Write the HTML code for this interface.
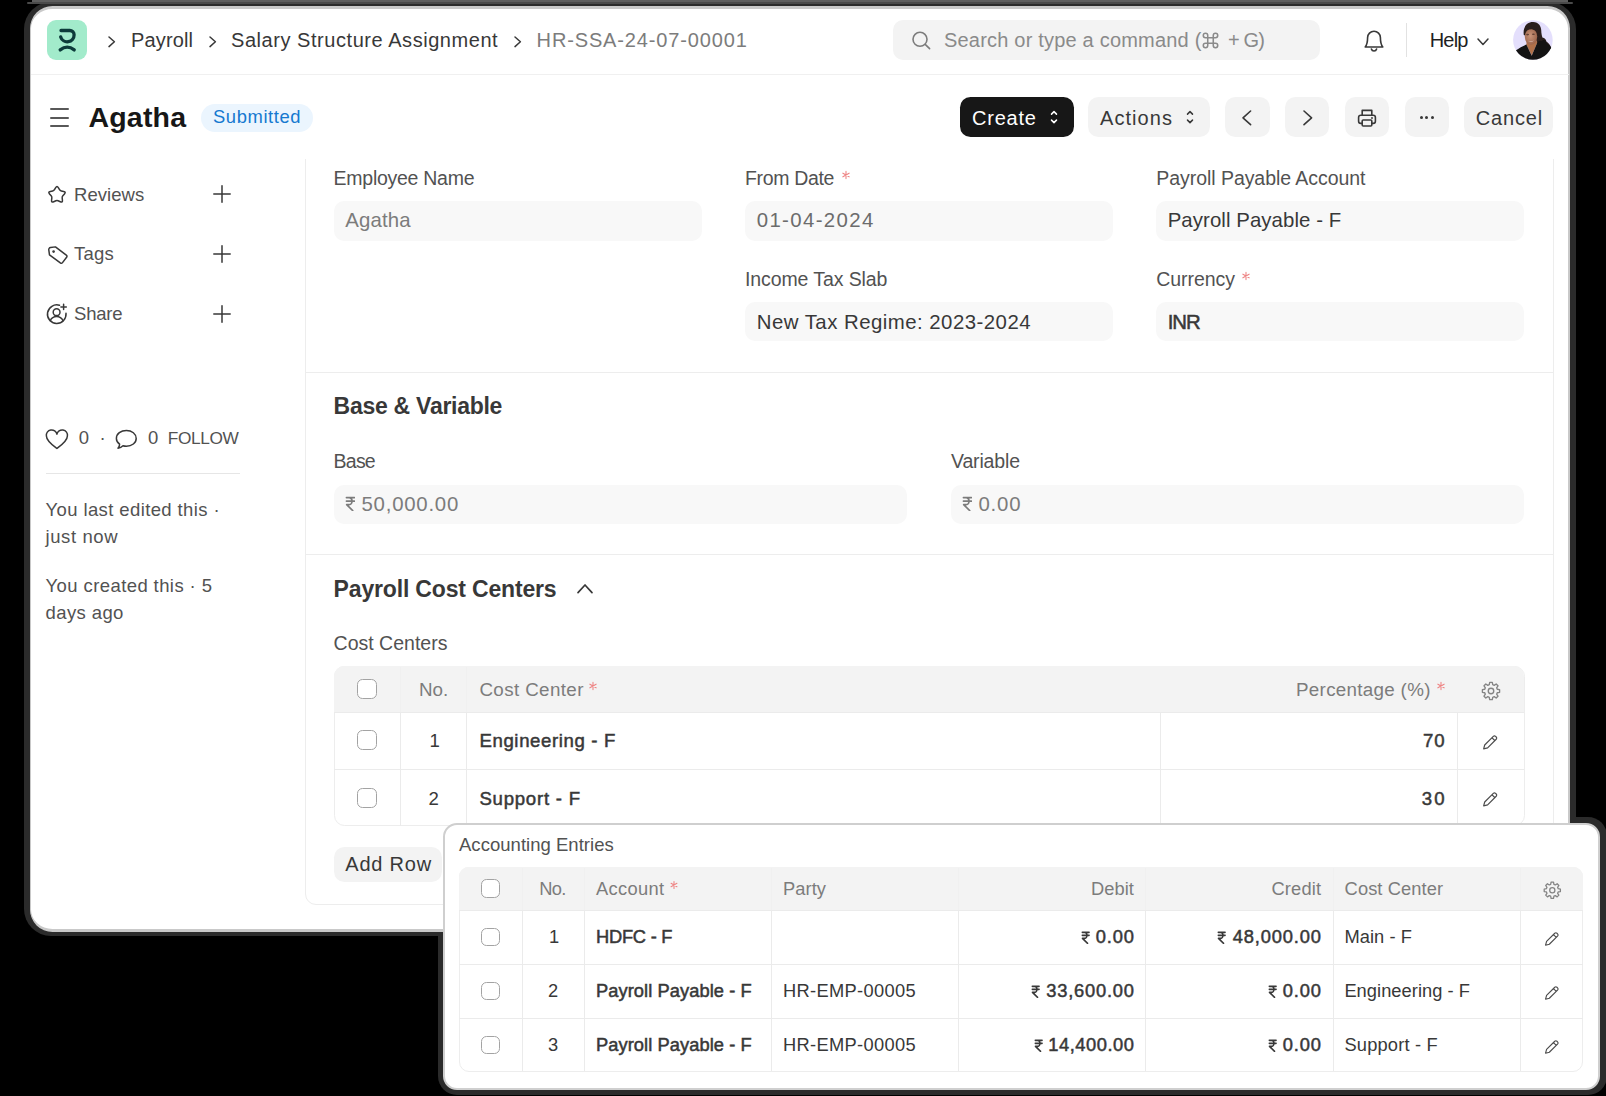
<!DOCTYPE html><html><head><meta charset="utf-8"><title>Salary Structure Assignment</title><style>
html,body{margin:0;padding:0;background:#000;}body{width:1606px;height:1096px;position:relative;overflow:hidden;font-family:"Liberation Sans", sans-serif;}
.a{position:absolute;display:block;}.t{position:absolute;white-space:pre;line-height:1;font-family:"Liberation Sans", sans-serif;}
</style></head><body>
<div class="a" style="left:32px;top:0px;width:1536px;height:2.2px;background:#5e5e5e;"></div>
<div class="a" style="left:437.5px;top:816.5px;width:1169.0px;height:278.0px;background:#2b2b2b;border-radius:19px;"></div>
<div class="a" style="left:24px;top:2px;width:1552px;height:934px;background:#2b2b2b;border-radius:27px;"></div>
<div class="a" style="left:27px;top:2.2px;width:1546px;height:1.5999999999999996px;background:#4a4a4a;border-radius:2px;"></div>
<div class="a" style="left:30px;top:5.7px;width:1540px;height:926.0px;background:#fff;border-radius:22.5px;border:2px solid #c9c9c9;box-sizing:border-box;border-top-width:3.2px;border-bottom-width:3px;border-left-width:1.8px;"></div>
<div class="a" style="left:304.5px;top:130px;width:1249.0px;height:774.5px;background:#fff;border-radius:11px;border:1px solid #ededed;box-sizing:border-box;"></div>
<div class="a" style="left:300px;top:75px;width:1260px;height:83.5px;background:#fff;"></div>
<div class="a" style="left:305px;top:372px;width:1248px;height:1px;background:#ededed;"></div>
<div class="a" style="left:305px;top:554px;width:1248px;height:1px;background:#ededed;"></div>
<div class="a" style="left:31px;top:73.8px;width:1538px;height:1.2000000000000028px;background:#f0f0f0;"></div>
<div class="a" style="left:47px;top:20px;width:40px;height:39.5px;background:#a2ebcb;border-radius:9px;"></div>
<svg class="a" style="left:47px;top:20px;" width="40" height="40" viewBox="0 0 40 40" fill="none"><path d="M14 10.5 H22.8 A4.3 4.3 0 0 1 27.1 14.8 A6.85 6.85 0 0 1 13.7 16.9" stroke="#0c3b3a" stroke-width="3.3" stroke-linecap="round"/><path d="M13.2 29.9 Q20.2 24.3 27.2 29.9" stroke="#0c3b3a" stroke-width="3.3" stroke-linecap="round"/></svg>
<svg class="a" style="left:107.39999999999999px;top:34.900000000000006px;" width="9.4" height="13.6" viewBox="0 0 9.4 13.6" fill="none"><path d="M2 2 L7.4 6.8 L2 11.6" stroke="#383838" stroke-width="1.5" stroke-linecap="round" stroke-linejoin="round"/></svg>
<svg class="a" style="left:207.5px;top:34.900000000000006px;" width="9.4" height="13.6" viewBox="0 0 9.4 13.6" fill="none"><path d="M2 2 L7.4 6.8 L2 11.6" stroke="#383838" stroke-width="1.5" stroke-linecap="round" stroke-linejoin="round"/></svg>
<svg class="a" style="left:512.9px;top:34.900000000000006px;" width="9.4" height="13.6" viewBox="0 0 9.4 13.6" fill="none"><path d="M2 2 L7.4 6.8 L2 11.6" stroke="#383838" stroke-width="1.5" stroke-linecap="round" stroke-linejoin="round"/></svg>
<div class="a" style="left:892.5px;top:20px;width:427.5px;height:39.5px;background:#f3f3f3;border-radius:10px;"></div>
<svg class="a" style="left:908px;top:27px;" width="26" height="26" viewBox="0 0 26 26" fill="none"><circle cx="12" cy="12.3" r="7" stroke="#7c7c7c" stroke-width="1.6"/><path d="M17.2 17.4 L21.6 21.6" stroke="#7c7c7c" stroke-width="1.6" stroke-linecap="round"/></svg>
<svg class="a" style="left:1202.3px;top:32px;" width="17" height="17" viewBox="0 0 16 16" fill="none"><path d="M5.4 5.4 V3.3 A2.1 2.1 0 1 0 3.3 5.4 H5.4 M10.6 5.4 H12.7 A2.1 2.1 0 1 0 10.6 3.3 V5.4 M10.6 10.6 V12.7 A2.1 2.1 0 1 0 12.7 10.6 H10.6 M5.4 10.6 H3.3 A2.1 2.1 0 1 0 5.4 12.7 V10.6 M5.4 5.4 H10.6 V10.6 H5.4 Z" stroke="#8a8a8a" stroke-width="1.45"/></svg>
<svg class="a" style="left:1362px;top:28px;" width="24" height="25" viewBox="0 0 24 25" fill="none"><path d="M3.2 19 C4.8 17.2 5.6 14.6 5.6 9.6 A6.4 6.4 0 0 1 18.4 9.6 C18.4 14.6 19.2 17.2 20.8 19 Z" stroke="#383838" stroke-width="1.6" stroke-linejoin="round"/><path d="M9.4 21 A2.7 2.7 0 0 0 14.6 21" stroke="#383838" stroke-width="1.6" stroke-linecap="round"/></svg>
<div class="a" style="left:1406.2px;top:23px;width:1.2000000000000455px;height:34px;background:#e2e2e2;"></div>
<svg class="a" style="left:1476.2px;top:37.099999999999994px;" width="14" height="9.4" viewBox="0 0 14 9.4" fill="none"><path d="M2 2 L7.0 7.4 L12 2" stroke="#383838" stroke-width="1.5" stroke-linecap="round" stroke-linejoin="round"/></svg>
<svg class="a" style="left:1513.3px;top:19.9px;" width="40" height="40" viewBox="0 0 40 40" fill="none"><defs><clipPath id="av"><circle cx="19.9" cy="20" r="19.8"/></clipPath><radialGradient id="sk" cx="0.45" cy="0.45" r="0.6"><stop offset="0" stop-color="#c9957a"/><stop offset="1" stop-color="#9a6249"/></radialGradient></defs><g clip-path="url(#av)"><rect width="40" height="40" fill="#e4dffc"/>
<path d="M10.8 15 C9.6 7 14 2 20.2 2.1 C26 2.2 28.6 7 28.3 12 C28.6 14 28.8 16 29.4 17.6 C31.5 18 33 19.5 33.4 21.5 C36 23 38 26 38.5 29 L26 31 L23 20 Z" fill="#2a1f1c"/>
<path d="M13.3 24.6 L18.7 35.6 L24.4 22.5 L22 18 L14 20 Z" fill="#b0714a"/>
<ellipse cx="18" cy="16.6" rx="6.2" ry="8.2" fill="url(#sk)"/>
<path d="M11.2 14.5 C11.5 8.5 16 5.6 20.5 6.2 C24.5 6.8 26.2 10.5 25.6 15.5 C24.6 12.2 22.5 9.8 19.5 9.4 C15.5 9 12.8 11 11.2 14.5 Z" fill="#2a1f1c"/>
<path d="M14.6 20.4 Q17.6 23.2 21 20.6 Q17.8 22 14.6 20.4 Z" fill="#e9d5cf"/><ellipse cx="14.6" cy="14.6" rx="1.5" ry="0.8" fill="#4a2e25" opacity="0.75"/><ellipse cx="20.4" cy="14.2" rx="1.5" ry="0.8" fill="#4a2e25" opacity="0.75"/>
<path d="M-1 41 L2.6 30.6 C6 28 10 26 13.4 24.5 L18.7 35.8 L24.3 22.4 C25.5 21 27 20.5 28.5 21 C31 19 33 20.5 33.5 23 C36 24.5 38 27 39.5 30 L41 41 Z" fill="#131313"/></g></svg>
<div class="a" style="left:50px;top:108px;width:19.400000000000006px;height:2px;background:#585858;border-radius:1px;"></div>
<div class="a" style="left:50px;top:116.5px;width:19.400000000000006px;height:2.0px;background:#585858;border-radius:1px;"></div>
<div class="a" style="left:50px;top:125px;width:19.400000000000006px;height:2px;background:#585858;border-radius:1px;"></div>
<div class="a" style="left:201px;top:103.5px;width:111.69999999999999px;height:28.0px;background:#ebf5fe;border-radius:14px;"></div>
<div class="a" style="left:960px;top:97px;width:113.79999999999995px;height:40px;background:#171717;border-radius:10.5px;"></div>
<svg class="a" style="left:1048.6px;top:108px;" width="10" height="18" viewBox="0 0 10 18" fill="none"><path d="M2.5 6.1 L5 3.6 L7.5 6.1 M2.5 12.1 L5 14.6 L7.5 12.1" stroke="#fff" stroke-width="1.5" stroke-linecap="round" stroke-linejoin="round"/></svg>
<div class="a" style="left:1088px;top:97px;width:122px;height:40px;background:#f3f3f3;border-radius:10.5px;"></div>
<svg class="a" style="left:1185.3px;top:108px;" width="10" height="18" viewBox="0 0 10 18" fill="none"><path d="M2.5 6.1 L5 3.6 L7.5 6.1 M2.5 12.1 L5 14.6 L7.5 12.1" stroke="#383838" stroke-width="1.5" stroke-linecap="round" stroke-linejoin="round"/></svg>
<div class="a" style="left:1225.4px;top:97px;width:44.399999999999864px;height:40px;background:#f3f3f3;border-radius:10.5px;"></div>
<svg class="a" style="left:1240.8px;top:108.5px;" width="11.6" height="17.6" viewBox="0 0 11.6 17.6" fill="none"><path d="M9.6 2 L2 8.8 L9.6 15.6" stroke="#383838" stroke-width="1.6" stroke-linecap="round" stroke-linejoin="round"/></svg>
<div class="a" style="left:1285.2px;top:97px;width:44.299999999999955px;height:40px;background:#f3f3f3;border-radius:10.5px;"></div>
<svg class="a" style="left:1301.9px;top:108.5px;" width="11.6" height="17.6" viewBox="0 0 11.6 17.6" fill="none"><path d="M2 2 L9.6 8.8 L2 15.6" stroke="#383838" stroke-width="1.6" stroke-linecap="round" stroke-linejoin="round"/></svg>
<div class="a" style="left:1345px;top:97px;width:44.299999999999955px;height:40px;background:#f3f3f3;border-radius:10.5px;"></div>
<svg class="a" style="left:1356px;top:106.5px;" width="22" height="22" viewBox="0 0 22 22" fill="none"><path d="M6.2 8.2 V3.4 H15.8 V8.2" stroke="#383838" stroke-width="1.6" stroke-linejoin="round"/><rect x="2.6" y="8.2" width="16.8" height="8.2" rx="2.2" stroke="#383838" stroke-width="1.6"/><rect x="6.2" y="13" width="9.6" height="6" rx="1" fill="#f3f3f3" stroke="#383838" stroke-width="1.6"/><circle cx="16" cy="11" r="0.9" fill="#383838"/></svg>
<div class="a" style="left:1404.5px;top:97px;width:44.299999999999955px;height:40px;background:#f3f3f3;border-radius:10.5px;"></div>
<div class="a" style="left:1419.7px;top:115.6px;width:3.0px;height:3.0px;background:#383838;border-radius:2px;"></div>
<div class="a" style="left:1425.3px;top:115.6px;width:3.0px;height:3.0px;background:#383838;border-radius:2px;"></div>
<div class="a" style="left:1430.9px;top:115.6px;width:3.0px;height:3.0px;background:#383838;border-radius:2px;"></div>
<div class="a" style="left:1464.3px;top:97px;width:88.70000000000005px;height:40px;background:#f3f3f3;border-radius:10.5px;"></div>
<svg class="a" style="left:44.5px;top:183.2px;" width="24" height="24" viewBox="0 0 24 24" fill="none"><path d="M10.70 4.55 Q12.00 2.30 13.30 4.55 L14.52 6.67 Q15.12 7.71 16.29 7.96 L18.68 8.47 Q21.23 9.00 19.48 10.93 L17.84 12.75 Q17.04 13.64 17.17 14.83 L17.43 17.26 Q17.70 19.85 15.33 18.79 L13.10 17.79 Q12.00 17.30 10.90 17.79 L8.67 18.79 Q6.30 19.85 6.57 17.26 L6.83 14.83 Q6.96 13.64 6.16 12.75 L4.52 10.93 Q2.77 9.00 5.32 8.47 L7.71 7.96 Q8.88 7.71 9.48 6.67 Z" stroke="#383838" stroke-width="1.5" stroke-linejoin="round"/></svg>
<svg class="a" style="left:46.5px;top:243.5px;" width="22" height="22" viewBox="0 0 22 22" fill="none"><path d="M2.6 4.6 A2 2 0 0 1 4.6 2.6 H9.6 L19.2 12.2 A1.6 1.6 0 0 1 19.2 14.4 L14.4 19.2 A1.6 1.6 0 0 1 12.2 19.2 L2.6 9.6 Z" stroke="#383838" stroke-width="1.5" stroke-linejoin="round" transform="rotate(-8 11 11)"/><circle cx="6.6" cy="7.6" r="1.3" fill="#383838"/></svg>
<svg class="a" style="left:45px;top:302px;" width="24" height="24" viewBox="0 0 24 24" fill="none"><path d="M14.5 3.3 A9.3 9.3 0 1 0 21 11.2" stroke="#383838" stroke-width="1.5" stroke-linecap="round"/><circle cx="11.6" cy="10.2" r="3.4" stroke="#383838" stroke-width="1.5"/><path d="M5.2 18.8 C6.8 15.4 9 14.6 11.6 14.6 C14.2 14.6 16.4 15.4 18 18.8" stroke="#383838" stroke-width="1.5" stroke-linecap="round"/><path d="M18.6 2.2 V7.6 M15.9 4.9 H21.3" stroke="#383838" stroke-width="1.5" stroke-linecap="round"/></svg>
<svg class="a" style="left:211.5px;top:183.7px;" width="20" height="20" viewBox="0 0 20 20" fill="none"><path d="M10 1.8 V18.2 M1.8 10 H18.2" stroke="#383838" stroke-width="1.5" stroke-linecap="round"/></svg>
<svg class="a" style="left:211.5px;top:243.7px;" width="20" height="20" viewBox="0 0 20 20" fill="none"><path d="M10 1.8 V18.2 M1.8 10 H18.2" stroke="#383838" stroke-width="1.5" stroke-linecap="round"/></svg>
<svg class="a" style="left:211.5px;top:303.7px;" width="20" height="20" viewBox="0 0 20 20" fill="none"><path d="M10 1.8 V18.2 M1.8 10 H18.2" stroke="#383838" stroke-width="1.5" stroke-linecap="round"/></svg>
<svg class="a" style="left:43.6px;top:427.8px;" width="26" height="23" viewBox="0 0 26 23" fill="none"><path d="M12.9 20.4 C8.3 17 2.4 12.8 2.4 7.9 A5.3 5.1 0 0 1 12.9 6.2 A5.3 5.1 0 0 1 23.4 7.9 C23.4 12.8 17.5 17 12.9 20.4 Z" stroke="#383838" stroke-width="1.5" stroke-linejoin="round"/></svg>
<svg class="a" style="left:114px;top:428px;" width="25" height="23" viewBox="0 0 25 23" fill="none"><path d="M12.4 2.4 C17.9 2.4 22.2 5.9 22.2 10.4 C22.2 14.9 17.9 18.2 12.4 18.2 C11.2 18.2 10 18 9 17.7 C7.6 19.2 5.8 20 4 20.2 C5 19 5.6 17.6 5.6 16.2 C3.6 14.8 2.4 12.7 2.4 10.4 C2.4 5.9 6.9 2.4 12.4 2.4 Z" stroke="#383838" stroke-width="1.5" stroke-linejoin="round"/></svg>
<div class="a" style="left:45.5px;top:472.6px;width:194.1px;height:1.3999999999999773px;background:#e6e6e6;"></div>
<div class="a" style="left:333.6px;top:201.3px;width:368.4px;height:39.5px;background:#f8f8f8;border-radius:10px;"></div>
<svg class="a" style="left:839.5px;top:168.5px;" width="12" height="12" viewBox="0 0 12 12" fill="none"><path d="M6.00 2.40 L6.00 9.60 M9.12 4.20 L2.88 7.80 M9.12 7.80 L2.88 4.20 " stroke="#ee8585" stroke-width="1.1" stroke-linecap="round"/></svg>
<div class="a" style="left:745px;top:201.3px;width:368.4000000000001px;height:39.5px;background:#f8f8f8;border-radius:10px;"></div>
<div class="a" style="left:1156.3px;top:201.3px;width:368.0px;height:39.5px;background:#f8f8f8;border-radius:10px;"></div>
<div class="a" style="left:745px;top:302px;width:368.4000000000001px;height:39px;background:#f8f8f8;border-radius:10px;"></div>
<svg class="a" style="left:1239.8px;top:270.2px;" width="12" height="12" viewBox="0 0 12 12" fill="none"><path d="M6.00 2.40 L6.00 9.60 M9.12 4.20 L2.88 7.80 M9.12 7.80 L2.88 4.20 " stroke="#ee8585" stroke-width="1.1" stroke-linecap="round"/></svg>
<div class="a" style="left:1156.3px;top:302px;width:368.0px;height:39px;background:#f8f8f8;border-radius:10px;"></div>
<div class="a" style="left:333.6px;top:484.5px;width:573.6999999999999px;height:39.299999999999955px;background:#f8f8f8;border-radius:10px;"></div>
<svg class="a" style="left:344.5px;top:495.59999999999997px;" width="10.976" height="15.6" viewBox="0 0 10 15.4" fill="none"><path d="M1 1.6 H9 M1 5.1 H9 M1 1.6 H3.8 C7.4 1.6 7.4 8.6 3.8 8.6 H1.2 L7.2 14.4" stroke="#7c7c7c" stroke-width="1.65" stroke-linecap="round" stroke-linejoin="round"/></svg>
<div class="a" style="left:951px;top:484.5px;width:573.3px;height:39.299999999999955px;background:#f8f8f8;border-radius:10px;"></div>
<svg class="a" style="left:961.5px;top:495.59999999999997px;" width="10.976" height="15.6" viewBox="0 0 10 15.4" fill="none"><path d="M1 1.6 H9 M1 5.1 H9 M1 1.6 H3.8 C7.4 1.6 7.4 8.6 3.8 8.6 H1.2 L7.2 14.4" stroke="#7c7c7c" stroke-width="1.65" stroke-linecap="round" stroke-linejoin="round"/></svg>
<svg class="a" style="left:575.8px;top:583.0px;" width="18" height="11.6" viewBox="0 0 18 11.6" fill="none"><path d="M2 9.6 L9.0 2 L16 9.6" stroke="#383838" stroke-width="1.7" stroke-linecap="round" stroke-linejoin="round"/></svg>
<div class="a" style="left:333.6px;top:666.2px;width:1191.0px;height:160.0px;background:#fff;border-radius:10.5px;border:1px solid #ededed;box-sizing:border-box;"></div>
<div class="a" style="left:334px;top:666.4px;width:1190.2px;height:45.60000000000002px;background:#f3f3f3;border-radius:10px 10px 0 0;"></div>
<div class="a" style="left:334px;top:712px;width:1190.2px;height:1px;background:#ebebeb;"></div>
<div class="a" style="left:334px;top:769px;width:1190.2px;height:1px;background:#ebebeb;"></div>
<div class="a" style="left:400px;top:713px;width:1px;height:112.79999999999995px;background:#ebebeb;"></div>
<div class="a" style="left:466px;top:713px;width:1px;height:112.79999999999995px;background:#ebebeb;"></div>
<div class="a" style="left:1160px;top:713px;width:1px;height:112.79999999999995px;background:#ebebeb;"></div>
<div class="a" style="left:1457px;top:713px;width:1px;height:112.79999999999995px;background:#ebebeb;"></div>
<div class="a" style="left:400px;top:667px;width:1px;height:45px;background:#f0f0f0;"></div>
<div class="a" style="left:466px;top:667px;width:1px;height:45px;background:#f0f0f0;"></div>
<div class="a" style="left:357px;top:679px;width:20px;height:20px;background:#fff;border-radius:5.5px;border:1.5px solid #a3a3a3;box-sizing:border-box;"></div>
<div class="a" style="left:357px;top:729.8px;width:20px;height:20.0px;background:#fff;border-radius:5.5px;border:1.5px solid #a3a3a3;box-sizing:border-box;"></div>
<div class="a" style="left:357px;top:787.8px;width:20px;height:20.0px;background:#fff;border-radius:5.5px;border:1.5px solid #a3a3a3;box-sizing:border-box;"></div>
<svg class="a" style="left:587.3px;top:679.6999999999999px;" width="12" height="12" viewBox="0 0 12 12" fill="none"><path d="M6.00 2.40 L6.00 9.60 M9.12 4.20 L2.88 7.80 M9.12 7.80 L2.88 4.20 " stroke="#ee8585" stroke-width="1.1" stroke-linecap="round"/></svg>
<svg class="a" style="left:1434.8px;top:679.6999999999999px;" width="12" height="12" viewBox="0 0 12 12" fill="none"><path d="M6.00 2.40 L6.00 9.60 M9.12 4.20 L2.88 7.80 M9.12 7.80 L2.88 4.20 " stroke="#ee8585" stroke-width="1.1" stroke-linecap="round"/></svg>
<svg class="a" style="left:1479.0px;top:678.75px;" width="24" height="24" viewBox="0 0 24 24" fill="none"><path d="M10.70 3.40 L13.30 3.40 L13.73 5.74 L15.20 6.34 L17.16 5.00 L19.00 6.84 L17.66 8.80 L18.26 10.27 L20.60 10.70 L20.60 13.30 L18.26 13.73 L17.66 15.20 L19.00 17.16 L17.16 19.00 L15.20 17.66 L13.73 18.26 L13.30 20.60 L10.70 20.60 L10.27 18.26 L8.80 17.66 L6.84 19.00 L5.00 17.16 L6.34 15.20 L5.74 13.73 L3.40 13.30 L3.40 10.70 L5.74 10.27 L6.34 8.80 L5.00 6.84 L6.84 5.00 L8.80 6.34 L10.27 5.74 Z" stroke="#848484" stroke-width="1.35" stroke-linejoin="round"/><circle cx="12" cy="12" r="2.75" stroke="#848484" stroke-width="1.35"/></svg>
<svg class="a" style="left:1482.4px;top:733.9000000000001px;" width="16.6" height="16.6" viewBox="0 0 16 16" fill="none"><path d="M1.6 14.4 L2.6 10.6 L10.9 2.3 A1.6 1.6 0 0 1 13.1 2.3 L13.7 2.9 A1.6 1.6 0 0 1 13.7 5.1 L5.4 13.4 Z M9.6 3.6 L12.4 6.4" stroke="#4c4c4c" stroke-width="1.15" stroke-linejoin="round" stroke-linecap="round"/></svg>
<svg class="a" style="left:1482.4px;top:791.4000000000001px;" width="16.6" height="16.6" viewBox="0 0 16 16" fill="none"><path d="M1.6 14.4 L2.6 10.6 L10.9 2.3 A1.6 1.6 0 0 1 13.1 2.3 L13.7 2.9 A1.6 1.6 0 0 1 13.7 5.1 L5.4 13.4 Z M9.6 3.6 L12.4 6.4" stroke="#4c4c4c" stroke-width="1.15" stroke-linejoin="round" stroke-linecap="round"/></svg>
<div class="a" style="left:333.6px;top:846.5px;width:108.89999999999998px;height:35.5px;background:#f3f3f3;border-radius:10.5px;"></div>
<span class="t" id="t0" style="left:131.0px;top:30.0px;font-size:20px;color:#383838;letter-spacing:0.14px;">Payroll</span>
<span class="t" id="t1" style="left:231.0px;top:30.0px;font-size:20px;color:#383838;letter-spacing:0.55px;">Salary Structure Assignment</span>
<span class="t" id="t2" style="left:536.6px;top:30.0px;font-size:20px;color:#7c7c7c;letter-spacing:0.86px;">HR-SSA-24-07-00001</span>
<span class="t" id="t3" style="left:944.0px;top:30.0px;font-size:20px;color:#8a8a8a;letter-spacing:0.20px;">Search or type a command (</span>
<span class="t" id="t4" style="left:1228.0px;top:30.0px;font-size:20px;color:#8a8a8a;letter-spacing:-0.88px;">+ G)</span>
<span class="t" id="t5" style="left:1429.7px;top:30.0px;font-size:20px;color:#1f1f1f;letter-spacing:-0.78px;">Help</span>
<span class="t" id="t6" style="left:88.5px;top:103.0px;font-size:28.5px;color:#171717;font-weight:700;letter-spacing:0.18px;">Agatha</span>
<span class="t" id="t7" style="left:213.0px;top:108.0px;font-size:18.4px;color:#1579d0;letter-spacing:0.59px;">Submitted</span>
<span class="t" id="t8" style="left:972.0px;top:108.0px;font-size:20px;color:#fff;letter-spacing:0.79px;">Create</span>
<span class="t" id="t9" style="left:1100.0px;top:108.0px;font-size:20px;color:#383838;letter-spacing:1.07px;">Actions</span>
<span class="t" id="t10" style="left:1475.7px;top:108.0px;font-size:20px;color:#383838;letter-spacing:0.85px;">Cancel</span>
<span class="t" id="t11" style="left:74.0px;top:186.0px;font-size:18.5px;color:#525252;letter-spacing:0.06px;">Reviews</span>
<span class="t" id="t12" style="left:74.0px;top:245.0px;font-size:18.5px;color:#525252;letter-spacing:0.21px;">Tags</span>
<span class="t" id="t13" style="left:74.0px;top:305.0px;font-size:18.5px;color:#525252;letter-spacing:-0.19px;">Share</span>
<span class="t" id="t14" style="left:78.7px;top:429.0px;font-size:18.5px;color:#525252;letter-spacing:-0.10px;">0</span>
<span class="t" id="t15" style="left:99.6px;top:429.0px;font-size:18.5px;color:#525252;">·</span>
<span class="t" id="t16" style="left:148.0px;top:429.0px;font-size:18.5px;color:#525252;letter-spacing:0.10px;">0</span>
<span class="t" id="t17" style="left:167.8px;top:430.0px;font-size:17.3px;color:#525252;letter-spacing:-0.40px;">FOLLOW</span>
<span class="t" id="t18" style="left:45.5px;top:501.0px;font-size:18.5px;color:#525252;letter-spacing:0.39px;">You last edited this ·</span>
<span class="t" id="t19" style="left:45.5px;top:528.0px;font-size:18.5px;color:#525252;letter-spacing:0.59px;">just now</span>
<span class="t" id="t20" style="left:45.5px;top:577.0px;font-size:18.5px;color:#525252;letter-spacing:0.41px;">You created this · 5</span>
<span class="t" id="t21" style="left:45.5px;top:604.0px;font-size:18.5px;color:#525252;letter-spacing:0.40px;">days ago</span>
<span class="t" id="t22" style="left:333.6px;top:169.0px;font-size:19.5px;color:#525252;letter-spacing:-0.27px;">Employee Name</span>
<span class="t" id="t23" style="left:345.3px;top:210.0px;font-size:20.4px;color:#7c7c7c;letter-spacing:0.11px;">Agatha</span>
<span class="t" id="t24" style="left:745.0px;top:169.0px;font-size:19.5px;color:#525252;letter-spacing:-0.34px;">From Date</span>
<span class="t" id="t25" style="left:756.7px;top:210.0px;font-size:20.4px;color:#6c6c6c;letter-spacing:1.37px;">01-04-2024</span>
<span class="t" id="t26" style="left:1156.3px;top:169.0px;font-size:19.5px;color:#525252;letter-spacing:-0.05px;">Payroll Payable Account</span>
<span class="t" id="t27" style="left:1167.7px;top:210.0px;font-size:20.4px;color:#383838;letter-spacing:0.07px;">Payroll Payable - F</span>
<span class="t" id="t28" style="left:745.0px;top:270.0px;font-size:19.5px;color:#525252;letter-spacing:-0.10px;">Income Tax Slab</span>
<span class="t" id="t29" style="left:756.7px;top:312.0px;font-size:20.4px;color:#383838;letter-spacing:0.47px;">New Tax Regime: 2023-2024</span>
<span class="t" id="t30" style="left:1156.3px;top:270.0px;font-size:19.5px;color:#525252;letter-spacing:-0.06px;">Currency</span>
<span class="t" id="t31" style="left:1167.7px;top:312.0px;font-size:20.4px;color:#383838;-webkit-text-stroke:0.5px;letter-spacing:-1.01px;">INR</span>
<span class="t" id="t32" style="left:333.6px;top:395.0px;font-size:23px;color:#383838;font-weight:700;letter-spacing:-0.27px;">Base &amp; Variable</span>
<span class="t" id="t33" style="left:333.6px;top:452.0px;font-size:19.5px;color:#525252;letter-spacing:-0.78px;">Base</span>
<span class="t" id="t34" style="left:361.5px;top:494.0px;font-size:20.4px;color:#7c7c7c;letter-spacing:0.76px;">50,000.00</span>
<span class="t" id="t35" style="left:951.0px;top:452.0px;font-size:19.5px;color:#525252;letter-spacing:-0.16px;">Variable</span>
<span class="t" id="t36" style="left:978.5px;top:494.0px;font-size:20.4px;color:#7c7c7c;letter-spacing:0.77px;">0.00</span>
<span class="t" id="t37" style="left:333.6px;top:578.0px;font-size:23px;color:#383838;font-weight:700;letter-spacing:-0.17px;">Payroll Cost Centers</span>
<span class="t" id="t38" style="left:333.6px;top:634.0px;font-size:19.5px;color:#525252;">Cost Centers</span>
<span class="t" id="t39" style="left:419.0px;top:681.0px;font-size:18.8px;color:#7c7c7c;letter-spacing:-0.02px;">No.</span>
<span class="t" id="t40" style="left:479.4px;top:681.0px;font-size:18.8px;color:#7c7c7c;letter-spacing:0.38px;">Cost Center</span>
<span class="t" id="t41" style="left:1296.0px;top:681.0px;font-size:18.8px;color:#7c7c7c;letter-spacing:0.30px;">Percentage (%)</span>
<span class="t" id="t42" style="left:429.4px;top:732.0px;font-size:18.6px;color:#383838;">1</span>
<span class="t" id="t43" style="left:479.4px;top:732.0px;font-size:18.6px;color:#383838;-webkit-text-stroke:0.5px;letter-spacing:0.63px;">Engineering - F</span>
<span class="t" id="t44" style="left:1423.0px;top:732.0px;font-size:18.6px;color:#383838;-webkit-text-stroke:0.5px;letter-spacing:1.01px;">70</span>
<span class="t" id="t45" style="left:428.4px;top:790.0px;font-size:18.6px;color:#383838;">2</span>
<span class="t" id="t46" style="left:479.4px;top:790.0px;font-size:18.6px;color:#383838;-webkit-text-stroke:0.5px;letter-spacing:0.76px;">Support - F</span>
<span class="t" id="t47" style="left:1421.8px;top:790.0px;font-size:18.6px;color:#383838;-webkit-text-stroke:0.5px;letter-spacing:2.21px;">30</span>
<span class="t" id="t48" style="left:345.3px;top:854.0px;font-size:20px;color:#383838;letter-spacing:0.79px;">Add Row</span>
<div class="a" style="left:442.5px;top:822.5px;width:1157.5px;height:267.0px;background:#fff;border-radius:14px;border:2px solid #cfcfcf;box-sizing:border-box;"></div>
<div class="a" style="left:458.8px;top:867.1px;width:1124.6000000000001px;height:204.69999999999993px;background:#fff;border-radius:10px;border:1px solid #ededed;box-sizing:border-box;"></div>
<div class="a" style="left:459.2px;top:867.3px;width:1123.8px;height:42.700000000000045px;background:#f3f3f3;border-radius:9.5px 9.5px 0 0;"></div>
<div class="a" style="left:459.2px;top:910px;width:1123.8px;height:1px;background:#ebebeb;"></div>
<div class="a" style="left:459.2px;top:964px;width:1123.8px;height:1px;background:#ebebeb;"></div>
<div class="a" style="left:459.2px;top:1018px;width:1123.8px;height:1px;background:#ebebeb;"></div>
<div class="a" style="left:522px;top:911px;width:1px;height:160.4000000000001px;background:#ebebeb;"></div>
<div class="a" style="left:522px;top:868px;width:1px;height:42px;background:#f0f0f0;"></div>
<div class="a" style="left:584px;top:911px;width:1px;height:160.4000000000001px;background:#ebebeb;"></div>
<div class="a" style="left:584px;top:868px;width:1px;height:42px;background:#f0f0f0;"></div>
<div class="a" style="left:771px;top:911px;width:1px;height:160.4000000000001px;background:#ebebeb;"></div>
<div class="a" style="left:771px;top:868px;width:1px;height:42px;background:#f0f0f0;"></div>
<div class="a" style="left:958px;top:911px;width:1px;height:160.4000000000001px;background:#ebebeb;"></div>
<div class="a" style="left:958px;top:868px;width:1px;height:42px;background:#f0f0f0;"></div>
<div class="a" style="left:1145px;top:911px;width:1px;height:160.4000000000001px;background:#ebebeb;"></div>
<div class="a" style="left:1145px;top:868px;width:1px;height:42px;background:#f0f0f0;"></div>
<div class="a" style="left:1333px;top:911px;width:1px;height:160.4000000000001px;background:#ebebeb;"></div>
<div class="a" style="left:1333px;top:868px;width:1px;height:42px;background:#f0f0f0;"></div>
<div class="a" style="left:1520px;top:911px;width:1px;height:160.4000000000001px;background:#ebebeb;"></div>
<div class="a" style="left:1520px;top:868px;width:1px;height:42px;background:#f0f0f0;"></div>
<div class="a" style="left:481px;top:879px;width:18.80000000000001px;height:18.799999999999955px;background:#fff;border-radius:5.5px;border:1.5px solid #a3a3a3;box-sizing:border-box;"></div>
<div class="a" style="left:481px;top:927.6px;width:18.80000000000001px;height:18.799999999999955px;background:#fff;border-radius:5.5px;border:1.5px solid #a3a3a3;box-sizing:border-box;"></div>
<div class="a" style="left:481px;top:981.6px;width:18.80000000000001px;height:18.799999999999955px;background:#fff;border-radius:5.5px;border:1.5px solid #a3a3a3;box-sizing:border-box;"></div>
<div class="a" style="left:481px;top:1035.6px;width:18.80000000000001px;height:18.799999999999955px;background:#fff;border-radius:5.5px;border:1.5px solid #a3a3a3;box-sizing:border-box;"></div>
<svg class="a" style="left:668.1999999999999px;top:878.8631578947368px;" width="12" height="12" viewBox="0 0 12 12" fill="none"><path d="M6.00 2.60 L6.00 9.40 M8.94 4.30 L3.06 7.70 M8.94 7.70 L3.06 4.30 " stroke="#ee8585" stroke-width="1.1" stroke-linecap="round"/></svg>
<svg class="a" style="left:1540.5px;top:878.5px;" width="22.6" height="22.6" viewBox="0 0 24 24" fill="none"><path d="M10.70 3.40 L13.30 3.40 L13.73 5.74 L15.20 6.34 L17.16 5.00 L19.00 6.84 L17.66 8.80 L18.26 10.27 L20.60 10.70 L20.60 13.30 L18.26 13.73 L17.66 15.20 L19.00 17.16 L17.16 19.00 L15.20 17.66 L13.73 18.26 L13.30 20.60 L10.70 20.60 L10.27 18.26 L8.80 17.66 L6.84 19.00 L5.00 17.16 L6.34 15.20 L5.74 13.73 L3.40 13.30 L3.40 10.70 L5.74 10.27 L6.34 8.80 L5.00 6.84 L6.84 5.00 L8.80 6.34 L10.27 5.74 Z" stroke="#848484" stroke-width="1.35" stroke-linejoin="round"/><circle cx="12" cy="12" r="2.75" stroke="#848484" stroke-width="1.35"/></svg>
<svg class="a" style="left:1081.0px;top:930.8px;" width="9.392" height="13.2" viewBox="0 0 10 15.4" fill="none"><path d="M1 1.6 H9 M1 5.1 H9 M1 1.6 H3.8 C7.4 1.6 7.4 8.6 3.8 8.6 H1.2 L7.2 14.4" stroke="#383838" stroke-width="1.8" stroke-linecap="round" stroke-linejoin="round"/></svg>
<svg class="a" style="left:1217.3px;top:930.8px;" width="9.392" height="13.2" viewBox="0 0 10 15.4" fill="none"><path d="M1 1.6 H9 M1 5.1 H9 M1 1.6 H3.8 C7.4 1.6 7.4 8.6 3.8 8.6 H1.2 L7.2 14.4" stroke="#383838" stroke-width="1.8" stroke-linecap="round" stroke-linejoin="round"/></svg>
<svg class="a" style="left:1543.6px;top:930.8000000000001px;" width="15.8" height="15.8" viewBox="0 0 16 16" fill="none"><path d="M1.6 14.4 L2.6 10.6 L10.9 2.3 A1.6 1.6 0 0 1 13.1 2.3 L13.7 2.9 A1.6 1.6 0 0 1 13.7 5.1 L5.4 13.4 Z M9.6 3.6 L12.4 6.4" stroke="#4c4c4c" stroke-width="1.15" stroke-linejoin="round" stroke-linecap="round"/></svg>
<svg class="a" style="left:1030.9px;top:984.8px;" width="9.392" height="13.2" viewBox="0 0 10 15.4" fill="none"><path d="M1 1.6 H9 M1 5.1 H9 M1 1.6 H3.8 C7.4 1.6 7.4 8.6 3.8 8.6 H1.2 L7.2 14.4" stroke="#383838" stroke-width="1.8" stroke-linecap="round" stroke-linejoin="round"/></svg>
<svg class="a" style="left:1268.1px;top:984.8px;" width="9.392" height="13.2" viewBox="0 0 10 15.4" fill="none"><path d="M1 1.6 H9 M1 5.1 H9 M1 1.6 H3.8 C7.4 1.6 7.4 8.6 3.8 8.6 H1.2 L7.2 14.4" stroke="#383838" stroke-width="1.8" stroke-linecap="round" stroke-linejoin="round"/></svg>
<svg class="a" style="left:1543.6px;top:985.3000000000001px;" width="15.8" height="15.8" viewBox="0 0 16 16" fill="none"><path d="M1.6 14.4 L2.6 10.6 L10.9 2.3 A1.6 1.6 0 0 1 13.1 2.3 L13.7 2.9 A1.6 1.6 0 0 1 13.7 5.1 L5.4 13.4 Z M9.6 3.6 L12.4 6.4" stroke="#4c4c4c" stroke-width="1.15" stroke-linejoin="round" stroke-linecap="round"/></svg>
<svg class="a" style="left:1033.5px;top:1038.8px;" width="9.392" height="13.2" viewBox="0 0 10 15.4" fill="none"><path d="M1 1.6 H9 M1 5.1 H9 M1 1.6 H3.8 C7.4 1.6 7.4 8.6 3.8 8.6 H1.2 L7.2 14.4" stroke="#383838" stroke-width="1.8" stroke-linecap="round" stroke-linejoin="round"/></svg>
<svg class="a" style="left:1268.1px;top:1038.8px;" width="9.392" height="13.2" viewBox="0 0 10 15.4" fill="none"><path d="M1 1.6 H9 M1 5.1 H9 M1 1.6 H3.8 C7.4 1.6 7.4 8.6 3.8 8.6 H1.2 L7.2 14.4" stroke="#383838" stroke-width="1.8" stroke-linecap="round" stroke-linejoin="round"/></svg>
<svg class="a" style="left:1543.6px;top:1039.1px;" width="15.8" height="15.8" viewBox="0 0 16 16" fill="none"><path d="M1.6 14.4 L2.6 10.6 L10.9 2.3 A1.6 1.6 0 0 1 13.1 2.3 L13.7 2.9 A1.6 1.6 0 0 1 13.7 5.1 L5.4 13.4 Z M9.6 3.6 L12.4 6.4" stroke="#4c4c4c" stroke-width="1.15" stroke-linejoin="round" stroke-linecap="round"/></svg>
<span class="t" id="t49" style="left:459.0px;top:836.0px;font-size:18.5px;color:#525252;letter-spacing:0.03px;">Accounting Entries</span>
<span class="t" id="t50" style="left:539.3px;top:880.0px;font-size:18.3px;color:#7c7c7c;letter-spacing:-0.68px;">No.</span>
<span class="t" id="t51" style="left:596.0px;top:880.0px;font-size:18.3px;color:#7c7c7c;letter-spacing:0.32px;">Account</span>
<span class="t" id="t52" style="left:783.0px;top:880.0px;font-size:18.3px;color:#7c7c7c;letter-spacing:0.08px;">Party</span>
<span class="t" id="t53" style="left:1091.0px;top:880.0px;font-size:18.3px;color:#7c7c7c;letter-spacing:0.03px;">Debit</span>
<span class="t" id="t54" style="left:1271.5px;top:880.0px;font-size:18.3px;color:#7c7c7c;letter-spacing:0.15px;">Credit</span>
<span class="t" id="t55" style="left:1344.6px;top:880.0px;font-size:18.3px;color:#7c7c7c;letter-spacing:0.09px;">Cost Center</span>
<span class="t" id="t56" style="left:549.0px;top:928.0px;font-size:18.3px;color:#383838;">1</span>
<span class="t" id="t57" style="left:596.0px;top:928.0px;font-size:18.3px;color:#383838;-webkit-text-stroke:0.5px;letter-spacing:-0.24px;">HDFC - F</span>
<span class="t" id="t58" style="left:1095.7px;top:928.0px;font-size:18.3px;color:#383838;-webkit-text-stroke:0.5px;letter-spacing:0.90px;">0.00</span>
<span class="t" id="t59" style="left:1232.7px;top:928.0px;font-size:18.3px;color:#383838;-webkit-text-stroke:0.5px;letter-spacing:0.87px;">48,000.00</span>
<span class="t" id="t60" style="left:1344.4px;top:928.0px;font-size:18.3px;color:#383838;letter-spacing:0.08px;">Main - F</span>
<span class="t" id="t61" style="left:548.0px;top:982.0px;font-size:18.3px;color:#383838;">2</span>
<span class="t" id="t62" style="left:596.0px;top:982.0px;font-size:18.3px;color:#383838;-webkit-text-stroke:0.5px;letter-spacing:0.07px;">Payroll Payable - F</span>
<span class="t" id="t63" style="left:783.0px;top:982.0px;font-size:18.3px;color:#383838;letter-spacing:0.33px;">HR-EMP-00005</span>
<span class="t" id="t64" style="left:1046.3px;top:982.0px;font-size:18.3px;color:#383838;-webkit-text-stroke:0.5px;letter-spacing:0.79px;">33,600.00</span>
<span class="t" id="t65" style="left:1282.8px;top:982.0px;font-size:18.3px;color:#383838;-webkit-text-stroke:0.5px;letter-spacing:0.87px;">0.00</span>
<span class="t" id="t66" style="left:1344.4px;top:982.0px;font-size:18.3px;color:#383838;letter-spacing:0.04px;">Engineering - F</span>
<span class="t" id="t67" style="left:548.0px;top:1036.0px;font-size:18.3px;color:#383838;">3</span>
<span class="t" id="t68" style="left:596.0px;top:1036.0px;font-size:18.3px;color:#383838;-webkit-text-stroke:0.5px;letter-spacing:0.07px;">Payroll Payable - F</span>
<span class="t" id="t69" style="left:783.0px;top:1036.0px;font-size:18.3px;color:#383838;letter-spacing:0.33px;">HR-EMP-00005</span>
<span class="t" id="t70" style="left:1048.2px;top:1036.0px;font-size:18.3px;color:#383838;-webkit-text-stroke:0.5px;letter-spacing:0.56px;">14,400.00</span>
<span class="t" id="t71" style="left:1282.8px;top:1036.0px;font-size:18.3px;color:#383838;-webkit-text-stroke:0.5px;letter-spacing:0.87px;">0.00</span>
<span class="t" id="t72" style="left:1344.4px;top:1036.0px;font-size:18.3px;color:#383838;letter-spacing:0.19px;">Support - F</span>
</body></html>
